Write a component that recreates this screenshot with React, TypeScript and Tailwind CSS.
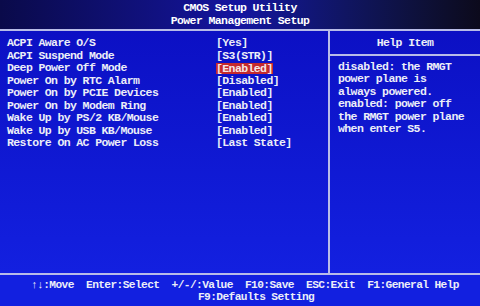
const items: { label: string; value: string; active?: boolean }[] = [
  { label: "ACPI Aware O/S", value: "[Yes]" },
  { label: "ACPI Suspend Mode", value: "[S3(STR)]" },
  { label: "Deep Power Off Mode", value: "[Enabled]", active: true },
  { label: "Power On by RTC Alarm", value: "[Disabled]" },
  { label: "Power On by PCIE Devices", value: "[Enabled]" },
  { label: "Power On by Modem Ring", value: "[Enabled]" },
  { label: "Wake Up by PS/2 KB/Mouse", value: "[Enabled]" },
  { label: "Wake Up by USB KB/Mouse", value: "[Enabled]" },
  { label: "Restore On AC Power Loss", value: "[Last State]" },
];

const help = [
  "disabled: the RMGT",
  "power plane is",
  "always powered.",
  "enabled: power off",
  "the RMGT power plane",
  "when enter S5.",
];

export default function App() {
  return (
    <div className="w-[480px] h-[306px] overflow-hidden flex flex-col bg-[#0f14d8] text-[#eceef8] font-['Liberation_Mono',monospace] font-bold text-[11.5px] tracking-[-0.6px]">
      {/* title */}
      <header className="h-[29px] pt-[1px] bg-gradient-to-r from-[#0a0a4a] via-[#1414a0] to-[#0c0a1c] text-center leading-[13px] text-white">
        <div>CMOS Setup Utility</div>
        <div>Power Management Setup</div>
      </header>

      <main className="flex h-[246px] border-t-2 border-b-2 border-[#b8bce8] bg-gradient-to-b from-[#0c10c4] to-[#1320e0]">
        <div className="w-[330px] border-r-2 border-[#b8bce8] pt-[6px] pl-[7px]">
          {items.map((it) => (
            <div key={it.label} className="flex h-[12.5px] items-center leading-[12.5px]">
              <span className="w-[209px] whitespace-pre">{it.label}</span>
              <span
                className={
                  it.active
                    ? "bg-[#c42a2e] text-[#f6e6e6] leading-[11px] whitespace-pre"
                    : "whitespace-pre"
                }
              >
                {it.value}
              </span>
            </div>
          ))}
        </div>

        <div className="flex-1 flex flex-col">
          <div className="h-[25px] border-b-2 border-[#b8bce8] flex items-center justify-center pt-[1px]">
            Help Item
          </div>
          <div className="pt-[5px] pl-[8px] leading-[12.4px]">
            {help.map((l) => (
              <div key={l} className="whitespace-pre">{l}</div>
            ))}
          </div>
        </div>
      </main>

      {/* key legend */}
      <footer className="flex-1 pt-[5px] text-[11.2px] leading-[11.5px] bg-[#1220e0]">
        <div className="pl-[31px] whitespace-pre">↑↓:Move  Enter:Select  +/-/:Value  F10:Save  ESC:Exit  F1:General Help</div>
        <div className="pl-[198px] whitespace-pre">F9:Defaults Setting</div>
      </footer>
    </div>
  );
}
